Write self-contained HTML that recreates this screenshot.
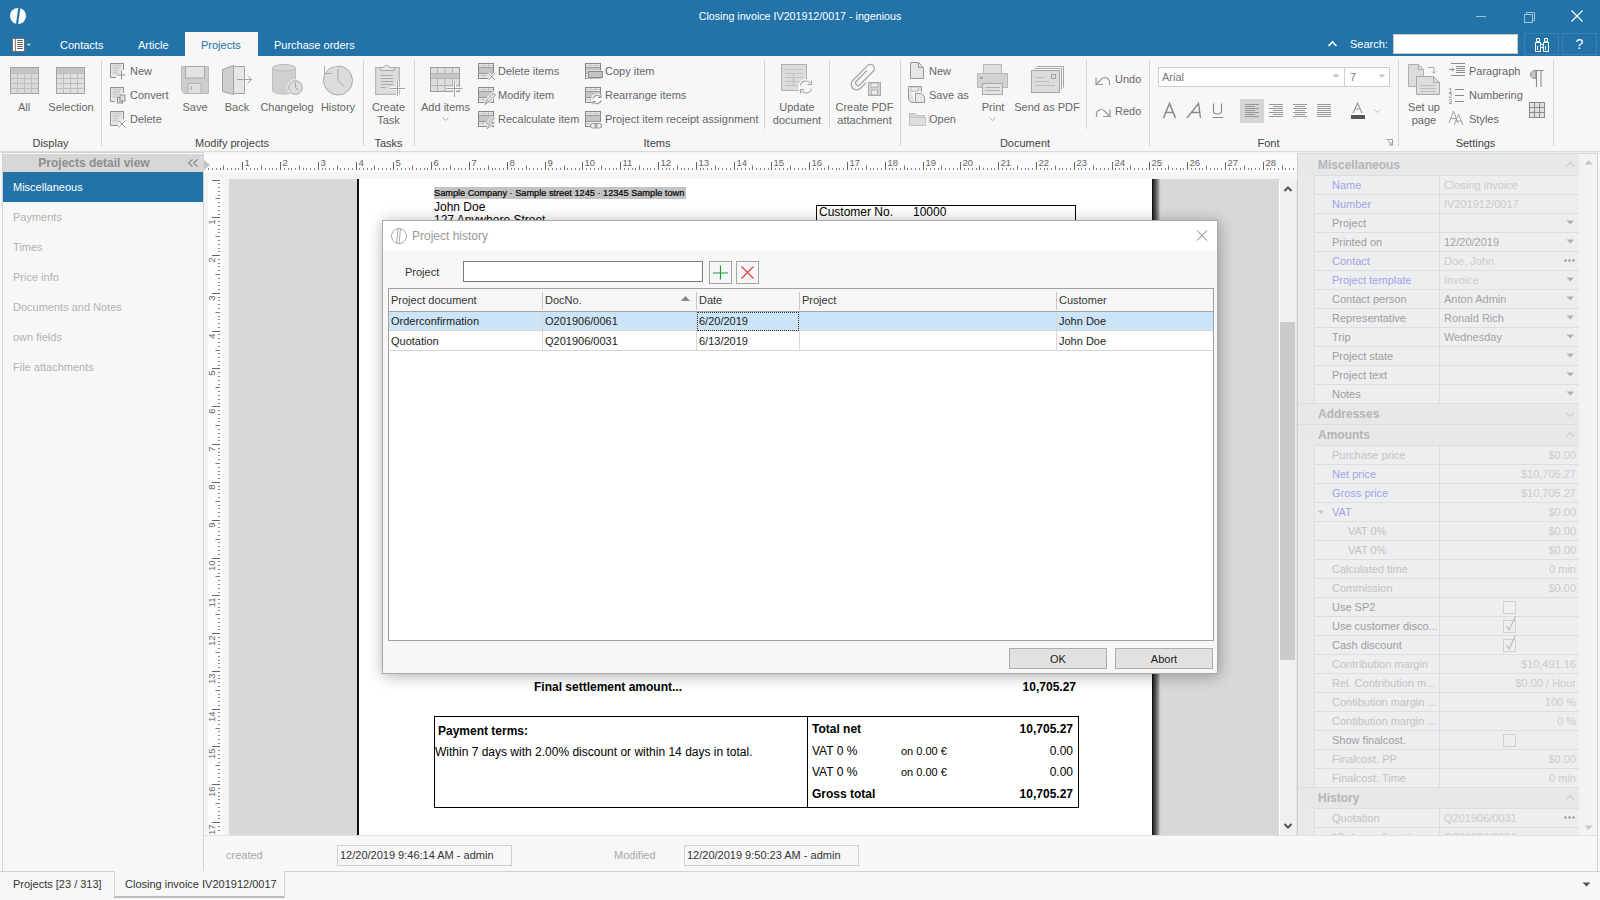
<!DOCTYPE html>
<html><head><meta charset="utf-8">
<style>
*{box-sizing:border-box;margin:0;padding:0}
html,body{width:1600px;height:900px;overflow:hidden;background:#f7f7f7;font-family:"Liberation Sans",sans-serif;font-size:11px;color:#444}
.a{position:absolute;white-space:nowrap;line-height:14px}
svg{position:absolute;overflow:visible}
.tw{color:#fff}
.rl{color:#666}
.gl{color:#444}
.sep{position:absolute;width:1px;background:#d4d4d4}
</style></head><body>
<!-- TITLE BAR -->
<div class="a" style="left:0;top:0;width:1600px;height:56px;background:#2373a9"></div>
<svg style="left:10px;top:8px" width="16" height="16" viewBox="0 0 16 16"><circle cx="8" cy="8" r="8" fill="#fff"/><path d="M8.3 -0.3 L10.4 0 L8.1 16.3 L6 16.1 Z" fill="#2373a9"/></svg>
<div class="a tw" style="left:0;top:9px;width:1600px;text-align:center;font-size:10.7px">Closing invoice IV201912/0017 - ingenious</div>
<svg style="left:1474px;top:10px" width="14" height="14"><line x1="2" y1="6.5" x2="12" y2="6.5" stroke="#9fc1da" stroke-width="1"/></svg>
<svg style="left:1522px;top:10px" width="14" height="14"><rect x="2.5" y="4.5" width="8" height="8" fill="none" stroke="#9fc1da"/><path d="M4.5 4.5 V2.5 H12.5 V10.5 H10.5" fill="none" stroke="#9fc1da"/></svg>
<svg style="left:1570px;top:9px" width="14" height="14"><path d="M1.5 1.5 L12.5 12.5 M12.5 1.5 L1.5 12.5" stroke="#fff" stroke-width="1.1"/></svg>
<!-- tabs row -->
<svg style="left:12px;top:38px" width="22" height="14"><rect x="0.5" y="0.5" width="12" height="13" fill="#fff" stroke="#746f6c"/><path d="M3.3 1V13.5" stroke="#746f6c"/><path d="M5.2 2.5H10.8M5.2 4.5H10.8M5.2 6.5H10.8M5.2 8.5H10.8M5.2 10.5H10.8" stroke="#5d5d5d"/><path d="M14.5 5.8H19L16.75 8Z" fill="#d9d4d0"/></svg>
<div class="a tw" style="left:60px;top:38px">Contacts</div>
<div class="a tw" style="left:138px;top:38px">Article</div>
<div class="a" style="left:185px;top:32px;width:73px;height:25px;background:#f7f7f7"></div>
<div class="a" style="left:201px;top:38px;color:#2373a9">Projects</div>
<div class="a tw" style="left:274px;top:38px">Purchase orders</div>
<svg style="left:1327px;top:39px" width="12" height="10"><path d="M1.5 7 L5.5 3 L9.5 7" fill="none" stroke="#fff" stroke-width="1.6"/></svg>
<div class="a tw" style="left:1350px;top:37px">Search:</div>
<div class="a" style="left:1393px;top:34px;width:125px;height:20px;background:#fff;border:1px solid #c9c9c9"></div>
<div class="a" style="left:1524px;top:33px;width:35px;height:22px;border:1px solid #3b82b3"></div>
<svg style="left:1533px;top:35px" width="18" height="18" viewBox="0 0 18 18"><path d="M3.5 3.5h3v3h-3zM11.5 3.5h3v3h-3z" fill="none" stroke="#fff"/><path d="M2.5 7.5h5v9h-5zM10.5 7.5h5v9h-5zM7.5 9.5h3v3h-3z" fill="none" stroke="#fff"/><path d="M4.5 11v4M12.5 11v4" stroke="#fff"/></svg>
<div class="a" style="left:1562px;top:33px;width:35px;height:22px;border:1px solid #3b82b3"></div>
<div class="a tw" style="left:1562px;top:37px;width:35px;text-align:center;font-size:14px">?</div>

<!-- RIBBON -->
<div class="a" style="left:0;top:151px;width:1600px;height:1px;background:#dadada"></div>
<div class="a" style="left:0;top:152px;width:1600px;height:1px;background:#ececec"></div>
<div class="sep" style="left:101px;top:60px;height:86px"></div>
<div class="sep" style="left:363px;top:60px;height:86px"></div>
<div class="sep" style="left:414px;top:60px;height:86px"></div>
<div class="sep" style="left:764px;top:60px;height:69px"></div>
<div class="sep" style="left:829px;top:60px;height:69px"></div>
<div class="sep" style="left:900px;top:60px;height:86px"></div>
<div class="sep" style="left:1086px;top:60px;height:69px"></div>
<div class="sep" style="left:1149px;top:60px;height:86px"></div>
<div class="sep" style="left:1398px;top:60px;height:86px"></div>
<div class="sep" style="left:1553px;top:60px;height:86px"></div>

<!-- Display group -->
<svg style="left:10px;top:67px" width="30" height="28" viewBox="0 0 30 28"><rect x="0.5" y="0.5" width="28" height="26" fill="#dadada" stroke="#a3a3a3"/><rect x="1" y="1" width="27" height="5.5" fill="#c4c4c4"/><path d="M1 6.5H28M1 11.5H28M1 16.5H28M1 21.5H28M7.5 6.5V26.5M14.5 6.5V26.5M21.5 6.5V26.5" stroke="#bdbdbd"/></svg>
<div class="a rl" style="left:0;top:100px;width:48px;text-align:center">All</div>
<svg style="left:56px;top:67px" width="30" height="28" viewBox="0 0 30 28"><rect x="0.5" y="0.5" width="28" height="26" fill="#e0e0e0" stroke="#a3a3a3"/><rect x="1" y="1" width="27" height="5.5" fill="#c4c4c4"/><path d="M1 6.5H28M1 11.5H28M1 16.5H28M1 21.5H28M7.5 6.5V26.5M14.5 6.5V26.5M21.5 6.5V26.5" stroke="#bdbdbd"/></svg>
<div class="a rl" style="left:48px;top:100px;width:46px;text-align:center">Selection</div>
<!-- Modify projects small -->
<svg style="left:110px;top:63px" width="17" height="17" viewBox="0 0 17 17"><path d="M13.5 7V0.5H0.5V14.5H6" fill="#e6e6e6" stroke="#8f8f8f"/><path d="M2.5 2.5h9M2.5 5h8M2.5 7.5h6M2.5 10h5" stroke="#c8c8c8" stroke-width="1.5"/><path d="M11.5 8V16M7.5 12H15.5" stroke="#8f8f8f"/></svg>
<div class="a rl" style="left:130px;top:64px">New</div>
<svg style="left:110px;top:87px" width="17" height="17" viewBox="0 0 17 17"><path d="M13.5 6V0.5H0.5V14.5H5" fill="#e6e6e6" stroke="#8f8f8f"/><path d="M2.5 2.5h9M2.5 5h8M2.5 7.5h6M2.5 10h5" stroke="#c8c8c8" stroke-width="1.5"/><rect x="7.5" y="10.5" width="5" height="5.5" fill="#ddd" stroke="#8f8f8f"/><rect x="10" y="8" width="5" height="6" fill="#ddd" stroke="#8f8f8f"/></svg>
<div class="a rl" style="left:130px;top:88px">Convert</div>
<svg style="left:110px;top:111px" width="17" height="17" viewBox="0 0 17 17"><path d="M13.5 8V0.5H0.5V14.5H8" fill="#e6e6e6" stroke="#8f8f8f"/><path d="M2.5 2.5h9M2.5 5h8M2.5 7.5h6M2.5 10h5" stroke="#c8c8c8" stroke-width="1.5"/><path d="M8.5 9.5L15.5 16.5M15.5 9.5L8.5 16.5" stroke="#9a9a9a"/></svg>
<div class="a rl" style="left:130px;top:112px">Delete</div>
<!-- Save -->
<svg style="left:181px;top:66px" width="28" height="28" viewBox="0 0 28 28"><path d="M0.5 0.5H27.5V27.5H3L0.5 24.5Z" fill="#cdcdcd" stroke="#bcbcbc"/><rect x="4.5" y="0.5" width="19" height="11.5" fill="#e3e3e3" stroke="#a9a9a9"/><rect x="7" y="17.5" width="13" height="10" fill="#e0e0e0" stroke="#b3b3b3"/><path d="M10.5 20v4" stroke="#a9a9a9"/></svg>
<div class="a rl" style="left:172px;top:100px;width:46px;text-align:center">Save</div>
<!-- Back -->
<svg style="left:222px;top:65px" width="31" height="30" viewBox="0 0 31 30"><path d="M11.5 1.5H22.5V28.5H11.5" fill="#e6e6e6" stroke="#a2a2a2"/><path d="M0.5 4.5L11.5 0.5V29.5L0.5 26.5Z" fill="#cfcfcf" stroke="#a2a2a2"/><path d="M15 14.5H29.5M25.5 10.5L29.5 14.5L25.5 18.5" fill="none" stroke="#a2a2a2"/></svg>
<div class="a rl" style="left:214px;top:100px;width:46px;text-align:center">Back</div>
<!-- Changelog -->
<svg style="left:272px;top:64px" width="32" height="32" viewBox="0 0 32 32"><path d="M0.5 3.5V26.5C0.5 28.5 5 30 11.5 30S23 28.5 23.5 26.5V3.5" fill="#d0d0d0" stroke="#c0c0c0"/><ellipse cx="12" cy="3.8" rx="11.5" ry="3.3" fill="#d6d6d6" stroke="#bdbdbd"/><circle cx="23.5" cy="23.5" r="7.5" fill="#dcdcdc" stroke="#f7f7f7" stroke-width="1.5"/><circle cx="23.5" cy="23.5" r="6.8" fill="#dcdcdc" stroke="#a6a6a6"/><path d="M23.5 18.5V23.5L26 26" fill="none" stroke="#a6a6a6"/></svg>
<div class="a rl" style="left:257px;top:100px;width:60px;text-align:center">Changelog</div>
<!-- History -->
<svg style="left:322px;top:64px" width="32" height="32" viewBox="0 0 32 32"><circle cx="16" cy="16.5" r="14.5" fill="#dcdcdc" stroke="#a9a9a9"/><path d="M14.5 1H2V8" fill="none" stroke="#f7f7f7" stroke-width="3"/><path d="M2.5 2V9.5H10" fill="none" stroke="#a9a9a9"/><path d="M16 5V16.5L22.5 23" fill="none" stroke="#a9a9a9"/></svg>
<div class="a rl" style="left:315px;top:100px;width:46px;text-align:center">History</div>


<!-- Create Task -->
<svg style="left:375px;top:63px" width="32" height="34" viewBox="0 0 32 34"><rect x="0.5" y="4.5" width="24" height="27" fill="#d4d4d4" stroke="#b8b8b8"/><rect x="2" y="6" width="21" height="24" fill="#dcdcdc"/><path d="M5.5 7.5V4.5H9C9 1.5 14 1.5 14 4.5H19.5V7.5Z" fill="#e6e6e6" stroke="#a9a9a9"/><path d="M6 12.5H18M6 15.5H18M6 18.5H18M6 21.5H18M6 24.5H11" stroke="#ababab"/><path d="M22.5 18V33M15 25.5H30" stroke="#f7f7f7" stroke-width="3"/><path d="M22.5 18V33M15 25.5H30" stroke="#a0a0a0"/></svg>
<div class="a rl" style="left:363px;top:100px;width:51px;text-align:center">Create</div>
<div class="a rl" style="left:363px;top:113px;width:51px;text-align:center">Task</div>
<!-- Add items -->
<svg style="left:429px;top:66px" width="35" height="32" viewBox="0 0 35 32"><rect x="1.5" y="1.5" width="29" height="24" fill="#dedede" stroke="#9c9c9c"/><rect x="2" y="7" width="28" height="6" fill="#c6c6c6"/><path d="M2 7.5H30M2 12.5H30M2 19.5H30M8.5 2V7M16 2V7M23.5 2V7M8.5 13V25M16 13V25M23.5 13V25" stroke="#b3b3b3"/><path d="M25.5 15V31M17.5 22.5H33.5" stroke="#f7f7f7" stroke-width="3"/><path d="M25.5 15V31M17.5 22.5H33.5" stroke="#a0a0a0"/></svg>
<div class="a rl" style="left:414px;top:100px;width:63px;text-align:center">Add items</div>
<svg style="left:441px;top:116px" width="10" height="6"><path d="M1.5 1.5L4.5 4.5L7.5 1.5" fill="none" stroke="#aaa"/></svg>
<!-- items small -->
<svg style="left:478px;top:63px" width="19" height="18" viewBox="0 0 19 18"><rect x="0.5" y="0.5" width="15" height="15" fill="#e9e9e9" stroke="#8a8a8a"/><rect x="1" y="5" width="14" height="5" fill="#c4c4c4"/><path d="M1 4.5H15M1 10.5H15" stroke="#9a9a9a"/><path d="M5.5 1V4M10.5 1V4M5.5 11V15M10.5 11V15M1 2.5H15M1 12.5H15" stroke="#c6c6c6"/><path d="M10.5 10.5L17 17M17 10.5L10.5 17" stroke="#f7f7f7" stroke-width="3"/><path d="M10.5 10.5L17 17M17 10.5L10.5 17" stroke="#999" stroke-width="1"/></svg>
<div class="a rl" style="left:498px;top:64px">Delete items</div>
<svg style="left:478px;top:87px" width="19" height="18" viewBox="0 0 19 18"><g><rect x="0.5" y="0.5" width="15" height="15" fill="#e9e9e9" stroke="#8a8a8a"/><rect x="1" y="5" width="14" height="5" fill="#c4c4c4"/><path d="M1 4.5H15M1 10.5H15" stroke="#9a9a9a"/><path d="M5.5 1V4M10.5 1V4M5.5 11V15M10.5 11V15M1 2.5H15M1 12.5H15" stroke="#c6c6c6"/></g><path d="M7 17.5L8.5 13L15.5 6L17.5 8L10.5 15Z" fill="#e6e6e6" stroke="#f7f7f7" stroke-width="3"/><path d="M7 17.5L8.5 13L15.5 6L17.5 8L10.5 15Z" fill="#e6e6e6" stroke="#999"/><path d="M9 13.5L11 15.5" stroke="#999"/></svg>
<div class="a rl" style="left:498px;top:88px">Modify item</div>
<svg style="left:478px;top:111px" width="19" height="18" viewBox="0 0 19 18"><rect x="0.5" y="0.5" width="15" height="15" fill="#e9e9e9" stroke="#8a8a8a"/><rect x="1" y="5" width="14" height="5" fill="#c4c4c4"/><path d="M1 4.5H15M1 10.5H15" stroke="#9a9a9a"/><path d="M5.5 1V4M10.5 1V4M5.5 11V15M10.5 11V15M1 2.5H15M1 12.5H15" stroke="#c6c6c6"/><path d="M14 7L8 13H11.5L9 18L16.5 11.5H13L16.5 7Z" fill="#dcdcdc" stroke="#f7f7f7" stroke-width="2.5"/><path d="M14 7L8 13H11.5L9 18L16.5 11.5H13L16.5 7Z" fill="#dcdcdc" stroke="#a0a0a0" stroke-width="0.9"/></svg>
<div class="a rl" style="left:498px;top:112px">Recalculate item</div>
<svg style="left:585px;top:63px" width="19" height="18" viewBox="0 0 19 18"><rect x="0.5" y="0.5" width="15" height="15" fill="#e9e9e9" stroke="#8a8a8a"/><rect x="1" y="5" width="14" height="5" fill="#c4c4c4"/><path d="M1 4.5H15M1 10.5H15" stroke="#9a9a9a"/><path d="M5.5 1V4M10.5 1V4M5.5 11V15M10.5 11V15M1 2.5H15M1 12.5H15" stroke="#c6c6c6"/><rect x="3.5" y="8.5" width="14" height="6" fill="#c4c4c4" stroke="#f7f7f7" stroke-width="2"/><rect x="3.5" y="8.5" width="14" height="6" fill="#c4c4c4" stroke="#8a8a8a"/></svg>
<div class="a rl" style="left:605px;top:64px">Copy item</div>
<svg style="left:585px;top:87px" width="19" height="18" viewBox="0 0 19 18"><rect x="0.5" y="0.5" width="15" height="15" fill="#e9e9e9" stroke="#8a8a8a"/><rect x="1" y="5" width="14" height="5" fill="#c4c4c4"/><path d="M1 4.5H15M1 10.5H15" stroke="#9a9a9a"/><path d="M5.5 1V4M10.5 1V4M5.5 11V15M10.5 11V15M1 2.5H15M1 12.5H15" stroke="#c6c6c6"/><circle cx="12" cy="12.5" r="6" fill="#f7f7f7"/><path d="M8 11.5A4.2 4.2 0 0 1 15.5 10M16 13.5A4.2 4.2 0 0 1 8.5 15" fill="none" stroke="#999" stroke-width="1.2"/><path d="M16 7.5V10.5H13M8 17.5V14.5H11" fill="none" stroke="#999" stroke-width="1.1"/></svg>
<div class="a rl" style="left:605px;top:88px">Rearrange items</div>
<svg style="left:585px;top:111px" width="19" height="18" viewBox="0 0 19 18"><rect x="0.5" y="0.5" width="15" height="15" fill="#e9e9e9" stroke="#8a8a8a"/><rect x="1" y="5" width="14" height="5" fill="#c4c4c4"/><path d="M1 4.5H15M1 10.5H15" stroke="#9a9a9a"/><path d="M5.5 1V4M10.5 1V4M5.5 11V15M10.5 11V15M1 2.5H15M1 12.5H15" stroke="#c6c6c6"/><rect x="5" y="11" width="13" height="7" fill="#f7f7f7"/><rect x="5.5" y="12.5" width="6.5" height="4.5" rx="2.25" fill="none" stroke="#999" stroke-width="1.1"/><rect x="10" y="12.5" width="6.5" height="4.5" rx="2.25" fill="none" stroke="#999" stroke-width="1.1"/></svg>
<div class="a rl" style="left:605px;top:112px">Project item receipt assignment</div>
<!-- Update document -->
<svg style="left:781px;top:64px" width="33" height="32" viewBox="0 0 33 32"><rect x="0.5" y="0.5" width="25" height="26" fill="#dcdcdc" stroke="#b0b0b0"/><path d="M4 5.5H22M4 9.5H22M4 13.5H22M4 17.5H22M4 21.5H18M12.5 9V22" stroke="#c2c2c2" stroke-width="1.2"/><circle cx="25" cy="23" r="8" fill="#f7f7f7"/><path d="M19.5 21.5A5.5 5.5 0 0 1 29.5 19.5M30.5 24.5A5.5 5.5 0 0 1 20.5 26.5" fill="none" stroke="#a9a9a9" stroke-width="1.2"/><path d="M30.5 16.5V20.5H26.5M19.5 29.5V25.5H23.5" fill="none" stroke="#a9a9a9" stroke-width="1.2"/></svg>
<div class="a rl" style="left:765px;top:100px;width:64px;text-align:center">Update</div>
<div class="a rl" style="left:765px;top:113px;width:64px;text-align:center">document</div>
<!-- Create PDF attachment -->
<svg style="left:849px;top:63px" width="34" height="34" viewBox="0 0 34 34"><g transform="translate(14 15) rotate(45) translate(-7 -18)"><path d="M4.5 10V25A2.5 2.5 0 0 0 9.5 25V6A4 4 0 0 0 1.5 6V27A5.5 5.5 0 0 0 12.5 27V19" fill="none" stroke="#a8a8a8" stroke-width="1.3"/></g><rect x="19.5" y="19.5" width="12" height="13" fill="#d4d4d4" stroke="#a8a8a8"/><rect x="22" y="20" width="7" height="4" fill="#ececec" stroke="#a8a8a8" stroke-width="0.8"/><rect x="22.5" y="27" width="6" height="5" fill="#ececec" stroke="#a8a8a8" stroke-width="0.8"/></svg>
<div class="a rl" style="left:829px;top:100px;width:71px;text-align:center">Create PDF</div>
<div class="a rl" style="left:829px;top:113px;width:71px;text-align:center">attachment</div>
<!-- Document small -->
<svg style="left:909px;top:62px" width="17" height="18" viewBox="0 0 17 18"><path d="M1.5 0.5H9.5L14.5 5.5V16.5H1.5Z" fill="#e6e6e6" stroke="#999"/><path d="M9.5 0.5V5.5H14.5" fill="none" stroke="#999"/></svg>
<div class="a rl" style="left:929px;top:64px">New</div>
<svg style="left:908px;top:86px" width="18" height="18" viewBox="0 0 18 18"><path d="M0.5 0.5H13.5V6M0.5 0.5V13.5L3 16.5H7" fill="#e0e0e0" stroke="#999"/><rect x="3" y="1" width="7" height="4" fill="#f0f0f0" stroke="#aaa" stroke-width="0.8"/><path d="M7.5 7.5H13.5L16.5 10.5V16.5H7.5Z" fill="#e6e6e6" stroke="#999"/></svg>
<div class="a rl" style="left:929px;top:88px">Save as</div>
<svg style="left:909px;top:111px" width="18" height="17" viewBox="0 0 18 17"><path d="M0.5 2.5H6L8 4.5H15.5V14.5H0.5Z" fill="#d5d5d5" stroke="#c0c0c0"/><path d="M0.5 6.5H16.5V14.5H0.5Z" fill="#dedede" stroke="#c4c4c4"/></svg>
<div class="a rl" style="left:929px;top:112px">Open</div>
<!-- Print -->
<svg style="left:977px;top:64px" width="32" height="32" viewBox="0 0 32 32"><rect x="6.5" y="0.5" width="18" height="9" fill="#dedede" stroke="#b8b8b8"/><rect x="0.5" y="9.5" width="30" height="14" fill="#d2d2d2" stroke="#b8b8b8"/><rect x="3" y="13" width="3" height="2" fill="#a0a0a0"/><rect x="5.5" y="19.5" width="20" height="11" fill="#e2e2e2" stroke="#a8a8a8"/><path d="M8 23.5H23M8 26.5H23" stroke="#b0b0b0"/></svg>
<div class="a rl" style="left:961px;top:100px;width:64px;text-align:center">Print</div>
<svg style="left:988px;top:116px" width="10" height="6"><path d="M1.5 1.5L4.5 4.5L7.5 1.5" fill="none" stroke="#aaa"/></svg>
<!-- Send as PDF -->
<svg style="left:1031px;top:66px" width="34" height="28" viewBox="0 0 34 28"><path d="M5.5 0.5H32.5V21.5M3.5 2.5H30.5V23.5" fill="none" stroke="#a6a6a6"/><rect x="0.5" y="4.5" width="28" height="22" fill="#dcdcdc" stroke="#a6a6a6"/><rect x="20.5" y="8.5" width="4" height="4" fill="none" stroke="#a6a6a6"/><path d="M4 11.5H14M4 15.5H18M4 19.5H24" stroke="#bdbdbd"/></svg>
<div class="a rl" style="left:1010px;top:100px;width:74px;text-align:center">Send as PDF</div>
<!-- undo redo -->
<svg style="left:1094px;top:73px" width="18" height="16" viewBox="0 0 18 16"><path d="M2 4.5V11.5H9M2.5 11L7.5 6C10.5 3 15 5 15.5 8.5V12" fill="none" stroke="#999" stroke-width="1.2"/></svg>
<div class="a rl" style="left:1115px;top:72px">Undo</div>
<svg style="left:1094px;top:104px" width="18" height="16" viewBox="0 0 18 16"><path d="M16 5.5V12.5H9M15.5 12L10.5 7C7.5 4 3 6 2.5 9.5V13" fill="none" stroke="#999" stroke-width="1.2"/></svg>
<div class="a rl" style="left:1115px;top:104px">Redo</div>
<!-- Font -->
<div class="a" style="left:1158px;top:67px;width:187px;height:20px;background:#fff;border:1px solid #cfcfcf"></div>
<div class="a" style="left:1162px;top:70px;color:#777">Arial</div>
<svg style="left:1332px;top:74px" width="8" height="5"><path d="M0.5 0.5H7.5L4 4Z" fill="#c4c4c4"/></svg>
<div class="a" style="left:1344px;top:67px;width:46px;height:20px;background:#fff;border:1px solid #cfcfcf"></div>
<div class="a" style="left:1350px;top:70px;color:#777">7</div>
<svg style="left:1378px;top:74px" width="8" height="5"><path d="M0.5 0.5H7.5L4 4Z" fill="#c4c4c4"/></svg>
<svg style="left:1162px;top:102px" width="17" height="17"><path d="M1.5 16L7.5 1.5L13.5 16M4 10.5H11" fill="none" stroke="#8a8a8a" stroke-width="1.6"/></svg>
<svg style="left:1186px;top:102px" width="18" height="17"><path d="M1 16L12.5 1.5L14.5 16M5 10.5H13.5" fill="none" stroke="#8a8a8a" stroke-width="1.4"/></svg>
<svg style="left:1211px;top:102px" width="15" height="16"><path d="M2.5 1.5V9C2.5 13 10.5 13 10.5 9V1.5M1.5 15.5H12" fill="none" stroke="#8a8a8a" stroke-width="1.1"/></svg>
<div class="a" style="left:1240px;top:99px;width:24px;height:24px;background:#d5d5d5"></div>
<svg style="left:1244px;top:103px" width="17" height="16"><path d="M1 1.5H15M1 3.5H11M1 5.5H15M1 7.5H11M1 9.5H15M1 11.5H11M1 13.5H15" stroke="#999"/></svg>
<svg style="left:1268px;top:103px" width="17" height="16"><path d="M1 1.5H15M5 3.5H15M1 5.5H15M5 7.5H15M1 9.5H15M5 11.5H15M1 13.5H15" stroke="#999"/></svg>
<svg style="left:1292px;top:103px" width="17" height="16"><path d="M1 1.5H15M3 3.5H13M1 5.5H15M3 7.5H13M1 9.5H15M3 11.5H13M1 13.5H15" stroke="#999"/></svg>
<svg style="left:1316px;top:103px" width="17" height="16"><path d="M1 1.5H15M1 3.5H15M1 5.5H15M1 7.5H15M1 9.5H15M1 11.5H15M1 13.5H15" stroke="#999"/></svg>
<svg style="left:1350px;top:102px" width="16" height="18"><path d="M3 11L7.5 1L12 11M5 7H10" fill="none" stroke="#999" stroke-width="1.1"/><rect x="1" y="13" width="14" height="4" fill="#555"/></svg>
<svg style="left:1373px;top:108px" width="10" height="6"><path d="M1.5 1.5L4.5 4.5L7.5 1.5" fill="none" stroke="#bbb"/></svg>
<!-- Settings -->
<svg style="left:1408px;top:64px" width="33" height="32" viewBox="0 0 33 32"><path d="M0.5 0.5H10.5L15.5 5.5V22.5H0.5Z" fill="#dcdcdc" stroke="#b0b0b0"/><path d="M10.5 0.5V5.5H15.5" fill="none" stroke="#b0b0b0"/><path d="M8.5 12.5H25.5L31.5 18.5V30.5H8.5Z" fill="#dedede" stroke="#a8a8a8"/><path d="M25.5 12.5V18.5H31.5" fill="none" stroke="#a8a8a8"/><path d="M12 21.5H28M12 24.5H28M12 27.5H28" stroke="#bdbdbd"/><path d="M20 3.5H26V9M24 7.5L26 9.5L28 7.5" fill="none" stroke="#aaa"/></svg>
<div class="a rl" style="left:1398px;top:100px;width:52px;text-align:center">Set up</div>
<div class="a rl" style="left:1398px;top:113px;width:52px;text-align:center">page</div>
<svg style="left:1448px;top:62px" width="18" height="16"><path d="M3 1.5H17M8 4.5H17M8 6.5H17M8 8.5H17M8 10.5H17M3 13.5H17" stroke="#8c8c8c"/><path d="M1 7.5H6M4 5.5L6 7.5L4 9.5" fill="none" stroke="#8c8c8c"/></svg>
<div class="a rl" style="left:1469px;top:64px">Paragraph</div>
<svg style="left:1448px;top:86px" width="18" height="18"><text x="0.5" y="6.5" font-size="6.5" fill="#7a7a7a" font-family="Liberation Sans">1</text><text x="0.5" y="12" font-size="6.5" fill="#7a7a7a" font-family="Liberation Sans">2</text><text x="0.5" y="17.5" font-size="6.5" fill="#7a7a7a" font-family="Liberation Sans">3</text><path d="M7 3.5H16M7 9.5H16M7 15.5H16" stroke="#8a8a8a"/></svg>
<div class="a rl" style="left:1469px;top:88px">Numbering</div>
<svg style="left:1448px;top:109px" width="18" height="18"><path d="M1 14L5.5 2L10 14M2.5 9.5H8.5M6 16L10.5 5L15 16M7.5 12H13.5" fill="none" stroke="#a5a5a5" stroke-width="1"/></svg>
<div class="a rl" style="left:1469px;top:112px">Styles</div>
<svg style="left:1529px;top:69px" width="16" height="20"><path d="M7 1.5C3 1.5 1.5 3.5 1.5 5.5S3 9.5 7 9.5Z" fill="#c4c4c4" stroke="#8a8a8a"/><path d="M7 1.5H14.5M7.5 1.5V18M12 1.5V18" fill="none" stroke="#8a8a8a" stroke-width="1.1"/></svg>
<svg style="left:1529px;top:102px" width="17" height="17"><rect x="0.5" y="0.5" width="15" height="15" fill="#e2e2e2" stroke="#8a8a8a"/><path d="M0.5 5.5H15.5M0.5 10.5H15.5M5.5 0.5V15.5M10.5 0.5V15.5" stroke="#8a8a8a"/></svg>

<!-- group labels -->
<div class="a gl" style="left:0;top:136px;width:101px;text-align:center">Display</div>
<div class="a gl" style="left:101px;top:136px;width:262px;text-align:center">Modify projects</div>
<div class="a gl" style="left:363px;top:136px;width:51px;text-align:center">Tasks</div>
<div class="a gl" style="left:414px;top:136px;width:486px;text-align:center">Items</div>
<div class="a gl" style="left:900px;top:136px;width:250px;text-align:center">Document</div>
<div class="a gl" style="left:1150px;top:136px;width:237px;text-align:center">Font</div>
<div class="a gl" style="left:1398px;top:136px;width:155px;text-align:center">Settings</div>
<svg style="left:1385px;top:138px" width="10" height="10"><path d="M1.5 1.5h6v6" fill="none" stroke="#999"/><path d="M3 3l4 4M4 7h3V4" fill="none" stroke="#999"/></svg>

<!-- LEFT PANEL -->
<div class="a" style="left:2px;top:152px;width:202px;height:720px;background:#f7f7f7;border:1px solid #d2d2d2"></div>
<div class="a" style="left:3px;top:154px;width:200px;height:18px;background:#d7d7d7"></div>
<div class="a" style="left:3px;top:156px;width:182px;text-align:center;font-weight:bold;font-size:12px;color:#8e8e8e">Projects detail view</div>
<svg style="left:187px;top:158px" width="12" height="10"><path d="M5.5 1.5L1.5 5L5.5 8.5M10.5 1.5L6.5 5L10.5 8.5" fill="none" stroke="#888" stroke-width="1.1"/></svg>
<div class="a" style="left:3px;top:172px;width:200px;height:30px;background:#2373a9"></div>
<div class="a" style="left:13px;top:180px;color:#fff">Miscellaneous</div>
<div class="a" style="left:13px;top:210px;color:#b2b2b2">Payments</div>
<div class="a" style="left:13px;top:240px;color:#b2b2b2">Times</div>
<div class="a" style="left:13px;top:270px;color:#b2b2b2">Price info</div>
<div class="a" style="left:13px;top:300px;color:#b2b2b2">Documents and Notes</div>
<div class="a" style="left:13px;top:330px;color:#b2b2b2">own fields</div>
<div class="a" style="left:13px;top:360px;color:#b2b2b2">File attachments</div>

<!-- MAIN AREA -->
<div class="a" style="left:204px;top:152px;width:1094px;height:684px;background:#f5f5f5"></div>
<div class="a" style="left:204px;top:154px;width:1093px;height:19px;background:#fafafa"></div>
<svg style="left:0;top:0" width="1600" height="900" viewBox="0 0 1600 900"><path d="M208.5 168V170" stroke="#888"/><path d="M212.5 168V170" stroke="#888"/><path d="M216.5 168V170" stroke="#888"/><path d="M220.5 168V170" stroke="#888"/><path d="M223.5 165.5V170" stroke="#777"/><path d="M227.5 168V170" stroke="#888"/><path d="M231.5 168V170" stroke="#888"/><path d="M235.5 168V170" stroke="#888"/><path d="M238.5 168V170" stroke="#888"/><path d="M242.5 162V170" stroke="#666"/><text x="244.5" y="166" font-size="9.5" fill="#666" font-family="Liberation Sans">1</text><path d="M246.5 168V170" stroke="#888"/><path d="M250.5 168V170" stroke="#888"/><path d="M254.5 168V170" stroke="#888"/><path d="M257.5 168V170" stroke="#888"/><path d="M261.5 165.5V170" stroke="#777"/><path d="M265.5 168V170" stroke="#888"/><path d="M269.5 168V170" stroke="#888"/><path d="M272.5 168V170" stroke="#888"/><path d="M276.5 168V170" stroke="#888"/><path d="M280.5 162V170" stroke="#666"/><text x="282.5" y="166" font-size="9.5" fill="#666" font-family="Liberation Sans">2</text><path d="M284.5 168V170" stroke="#888"/><path d="M288.5 168V170" stroke="#888"/><path d="M291.5 168V170" stroke="#888"/><path d="M295.5 168V170" stroke="#888"/><path d="M299.5 165.5V170" stroke="#777"/><path d="M303.5 168V170" stroke="#888"/><path d="M306.5 168V170" stroke="#888"/><path d="M310.5 168V170" stroke="#888"/><path d="M314.5 168V170" stroke="#888"/><path d="M318.5 162V170" stroke="#666"/><text x="320.5" y="166" font-size="9.5" fill="#666" font-family="Liberation Sans">3</text><path d="M322.5 168V170" stroke="#888"/><path d="M325.5 168V170" stroke="#888"/><path d="M329.5 168V170" stroke="#888"/><path d="M333.5 168V170" stroke="#888"/><path d="M337.5 165.5V170" stroke="#777"/><path d="M340.5 168V170" stroke="#888"/><path d="M344.5 168V170" stroke="#888"/><path d="M348.5 168V170" stroke="#888"/><path d="M352.5 168V170" stroke="#888"/><path d="M356.5 162V170" stroke="#666"/><text x="358.5" y="166" font-size="9.5" fill="#666" font-family="Liberation Sans">4</text><path d="M359.5 168V170" stroke="#888"/><path d="M363.5 168V170" stroke="#888"/><path d="M367.5 168V170" stroke="#888"/><path d="M371.5 168V170" stroke="#888"/><path d="M374.5 165.5V170" stroke="#777"/><path d="M378.5 168V170" stroke="#888"/><path d="M382.5 168V170" stroke="#888"/><path d="M386.5 168V170" stroke="#888"/><path d="M390.5 168V170" stroke="#888"/><path d="M393.5 162V170" stroke="#666"/><text x="395.5" y="166" font-size="9.5" fill="#666" font-family="Liberation Sans">5</text><path d="M397.5 168V170" stroke="#888"/><path d="M401.5 168V170" stroke="#888"/><path d="M405.5 168V170" stroke="#888"/><path d="M409.5 168V170" stroke="#888"/><path d="M412.5 165.5V170" stroke="#777"/><path d="M416.5 168V170" stroke="#888"/><path d="M420.5 168V170" stroke="#888"/><path d="M424.5 168V170" stroke="#888"/><path d="M427.5 168V170" stroke="#888"/><path d="M431.5 162V170" stroke="#666"/><text x="433.5" y="166" font-size="9.5" fill="#666" font-family="Liberation Sans">6</text><path d="M435.5 168V170" stroke="#888"/><path d="M439.5 168V170" stroke="#888"/><path d="M443.5 168V170" stroke="#888"/><path d="M446.5 168V170" stroke="#888"/><path d="M450.5 165.5V170" stroke="#777"/><path d="M454.5 168V170" stroke="#888"/><path d="M458.5 168V170" stroke="#888"/><path d="M461.5 168V170" stroke="#888"/><path d="M465.5 168V170" stroke="#888"/><path d="M469.5 162V170" stroke="#666"/><text x="471.5" y="166" font-size="9.5" fill="#666" font-family="Liberation Sans">7</text><path d="M473.5 168V170" stroke="#888"/><path d="M477.5 168V170" stroke="#888"/><path d="M480.5 168V170" stroke="#888"/><path d="M484.5 168V170" stroke="#888"/><path d="M488.5 165.5V170" stroke="#777"/><path d="M492.5 168V170" stroke="#888"/><path d="M495.5 168V170" stroke="#888"/><path d="M499.5 168V170" stroke="#888"/><path d="M503.5 168V170" stroke="#888"/><path d="M507.5 162V170" stroke="#666"/><text x="509.5" y="166" font-size="9.5" fill="#666" font-family="Liberation Sans">8</text><path d="M511.5 168V170" stroke="#888"/><path d="M514.5 168V170" stroke="#888"/><path d="M518.5 168V170" stroke="#888"/><path d="M522.5 168V170" stroke="#888"/><path d="M526.5 165.5V170" stroke="#777"/><path d="M529.5 168V170" stroke="#888"/><path d="M533.5 168V170" stroke="#888"/><path d="M537.5 168V170" stroke="#888"/><path d="M541.5 168V170" stroke="#888"/><path d="M545.5 162V170" stroke="#666"/><text x="547.5" y="166" font-size="9.5" fill="#666" font-family="Liberation Sans">9</text><path d="M548.5 168V170" stroke="#888"/><path d="M552.5 168V170" stroke="#888"/><path d="M556.5 168V170" stroke="#888"/><path d="M560.5 168V170" stroke="#888"/><path d="M564.5 165.5V170" stroke="#777"/><path d="M567.5 168V170" stroke="#888"/><path d="M571.5 168V170" stroke="#888"/><path d="M575.5 168V170" stroke="#888"/><path d="M579.5 168V170" stroke="#888"/><path d="M582.5 162V170" stroke="#666"/><text x="584.5" y="166" font-size="9.5" fill="#666" font-family="Liberation Sans">10</text><path d="M586.5 168V170" stroke="#888"/><path d="M590.5 168V170" stroke="#888"/><path d="M594.5 168V170" stroke="#888"/><path d="M598.5 168V170" stroke="#888"/><path d="M601.5 165.5V170" stroke="#777"/><path d="M605.5 168V170" stroke="#888"/><path d="M609.5 168V170" stroke="#888"/><path d="M613.5 168V170" stroke="#888"/><path d="M616.5 168V170" stroke="#888"/><path d="M620.5 162V170" stroke="#666"/><text x="622.5" y="166" font-size="9.5" fill="#666" font-family="Liberation Sans">11</text><path d="M624.5 168V170" stroke="#888"/><path d="M628.5 168V170" stroke="#888"/><path d="M632.5 168V170" stroke="#888"/><path d="M635.5 168V170" stroke="#888"/><path d="M639.5 165.5V170" stroke="#777"/><path d="M643.5 168V170" stroke="#888"/><path d="M647.5 168V170" stroke="#888"/><path d="M650.5 168V170" stroke="#888"/><path d="M654.5 168V170" stroke="#888"/><path d="M658.5 162V170" stroke="#666"/><text x="660.5" y="166" font-size="9.5" fill="#666" font-family="Liberation Sans">12</text><path d="M662.5 168V170" stroke="#888"/><path d="M666.5 168V170" stroke="#888"/><path d="M669.5 168V170" stroke="#888"/><path d="M673.5 168V170" stroke="#888"/><path d="M677.5 165.5V170" stroke="#777"/><path d="M681.5 168V170" stroke="#888"/><path d="M684.5 168V170" stroke="#888"/><path d="M688.5 168V170" stroke="#888"/><path d="M692.5 168V170" stroke="#888"/><path d="M696.5 162V170" stroke="#666"/><text x="698.5" y="166" font-size="9.5" fill="#666" font-family="Liberation Sans">13</text><path d="M700.5 168V170" stroke="#888"/><path d="M703.5 168V170" stroke="#888"/><path d="M707.5 168V170" stroke="#888"/><path d="M711.5 168V170" stroke="#888"/><path d="M715.5 165.5V170" stroke="#777"/><path d="M718.5 168V170" stroke="#888"/><path d="M722.5 168V170" stroke="#888"/><path d="M726.5 168V170" stroke="#888"/><path d="M730.5 168V170" stroke="#888"/><path d="M734.5 162V170" stroke="#666"/><text x="736.5" y="166" font-size="9.5" fill="#666" font-family="Liberation Sans">14</text><path d="M737.5 168V170" stroke="#888"/><path d="M741.5 168V170" stroke="#888"/><path d="M745.5 168V170" stroke="#888"/><path d="M749.5 168V170" stroke="#888"/><path d="M752.5 165.5V170" stroke="#777"/><path d="M756.5 168V170" stroke="#888"/><path d="M760.5 168V170" stroke="#888"/><path d="M764.5 168V170" stroke="#888"/><path d="M768.5 168V170" stroke="#888"/><path d="M771.5 162V170" stroke="#666"/><text x="773.5" y="166" font-size="9.5" fill="#666" font-family="Liberation Sans">15</text><path d="M775.5 168V170" stroke="#888"/><path d="M779.5 168V170" stroke="#888"/><path d="M783.5 168V170" stroke="#888"/><path d="M787.5 168V170" stroke="#888"/><path d="M790.5 165.5V170" stroke="#777"/><path d="M794.5 168V170" stroke="#888"/><path d="M798.5 168V170" stroke="#888"/><path d="M802.5 168V170" stroke="#888"/><path d="M805.5 168V170" stroke="#888"/><path d="M809.5 162V170" stroke="#666"/><text x="811.5" y="166" font-size="9.5" fill="#666" font-family="Liberation Sans">16</text><path d="M813.5 168V170" stroke="#888"/><path d="M817.5 168V170" stroke="#888"/><path d="M821.5 168V170" stroke="#888"/><path d="M824.5 168V170" stroke="#888"/><path d="M828.5 165.5V170" stroke="#777"/><path d="M832.5 168V170" stroke="#888"/><path d="M836.5 168V170" stroke="#888"/><path d="M839.5 168V170" stroke="#888"/><path d="M843.5 168V170" stroke="#888"/><path d="M847.5 162V170" stroke="#666"/><text x="849.5" y="166" font-size="9.5" fill="#666" font-family="Liberation Sans">17</text><path d="M851.5 168V170" stroke="#888"/><path d="M855.5 168V170" stroke="#888"/><path d="M858.5 168V170" stroke="#888"/><path d="M862.5 168V170" stroke="#888"/><path d="M866.5 165.5V170" stroke="#777"/><path d="M870.5 168V170" stroke="#888"/><path d="M873.5 168V170" stroke="#888"/><path d="M877.5 168V170" stroke="#888"/><path d="M881.5 168V170" stroke="#888"/><path d="M885.5 162V170" stroke="#666"/><text x="887.5" y="166" font-size="9.5" fill="#666" font-family="Liberation Sans">18</text><path d="M889.5 168V170" stroke="#888"/><path d="M892.5 168V170" stroke="#888"/><path d="M896.5 168V170" stroke="#888"/><path d="M900.5 168V170" stroke="#888"/><path d="M904.5 165.5V170" stroke="#777"/><path d="M907.5 168V170" stroke="#888"/><path d="M911.5 168V170" stroke="#888"/><path d="M915.5 168V170" stroke="#888"/><path d="M919.5 168V170" stroke="#888"/><path d="M923.5 162V170" stroke="#666"/><text x="925.5" y="166" font-size="9.5" fill="#666" font-family="Liberation Sans">19</text><path d="M926.5 168V170" stroke="#888"/><path d="M930.5 168V170" stroke="#888"/><path d="M934.5 168V170" stroke="#888"/><path d="M938.5 168V170" stroke="#888"/><path d="M941.5 165.5V170" stroke="#777"/><path d="M945.5 168V170" stroke="#888"/><path d="M949.5 168V170" stroke="#888"/><path d="M953.5 168V170" stroke="#888"/><path d="M957.5 168V170" stroke="#888"/><path d="M960.5 162V170" stroke="#666"/><text x="962.5" y="166" font-size="9.5" fill="#666" font-family="Liberation Sans">20</text><path d="M964.5 168V170" stroke="#888"/><path d="M968.5 168V170" stroke="#888"/><path d="M972.5 168V170" stroke="#888"/><path d="M976.5 168V170" stroke="#888"/><path d="M979.5 165.5V170" stroke="#777"/><path d="M983.5 168V170" stroke="#888"/><path d="M987.5 168V170" stroke="#888"/><path d="M991.5 168V170" stroke="#888"/><path d="M994.5 168V170" stroke="#888"/><path d="M998.5 162V170" stroke="#666"/><text x="1000.5" y="166" font-size="9.5" fill="#666" font-family="Liberation Sans">21</text><path d="M1002.5 168V170" stroke="#888"/><path d="M1006.5 168V170" stroke="#888"/><path d="M1010.5 168V170" stroke="#888"/><path d="M1013.5 168V170" stroke="#888"/><path d="M1017.5 165.5V170" stroke="#777"/><path d="M1021.5 168V170" stroke="#888"/><path d="M1025.5 168V170" stroke="#888"/><path d="M1028.5 168V170" stroke="#888"/><path d="M1032.5 168V170" stroke="#888"/><path d="M1036.5 162V170" stroke="#666"/><text x="1038.5" y="166" font-size="9.5" fill="#666" font-family="Liberation Sans">22</text><path d="M1040.5 168V170" stroke="#888"/><path d="M1044.5 168V170" stroke="#888"/><path d="M1047.5 168V170" stroke="#888"/><path d="M1051.5 168V170" stroke="#888"/><path d="M1055.5 165.5V170" stroke="#777"/><path d="M1059.5 168V170" stroke="#888"/><path d="M1062.5 168V170" stroke="#888"/><path d="M1066.5 168V170" stroke="#888"/><path d="M1070.5 168V170" stroke="#888"/><path d="M1074.5 162V170" stroke="#666"/><text x="1076.5" y="166" font-size="9.5" fill="#666" font-family="Liberation Sans">23</text><path d="M1078.5 168V170" stroke="#888"/><path d="M1081.5 168V170" stroke="#888"/><path d="M1085.5 168V170" stroke="#888"/><path d="M1089.5 168V170" stroke="#888"/><path d="M1093.5 165.5V170" stroke="#777"/><path d="M1096.5 168V170" stroke="#888"/><path d="M1100.5 168V170" stroke="#888"/><path d="M1104.5 168V170" stroke="#888"/><path d="M1108.5 168V170" stroke="#888"/><path d="M1112.5 162V170" stroke="#666"/><text x="1114.5" y="166" font-size="9.5" fill="#666" font-family="Liberation Sans">24</text><path d="M1115.5 168V170" stroke="#888"/><path d="M1119.5 168V170" stroke="#888"/><path d="M1123.5 168V170" stroke="#888"/><path d="M1127.5 168V170" stroke="#888"/><path d="M1130.5 165.5V170" stroke="#777"/><path d="M1134.5 168V170" stroke="#888"/><path d="M1138.5 168V170" stroke="#888"/><path d="M1142.5 168V170" stroke="#888"/><path d="M1146.5 168V170" stroke="#888"/><path d="M1149.5 162V170" stroke="#666"/><text x="1151.5" y="166" font-size="9.5" fill="#666" font-family="Liberation Sans">25</text><path d="M1153.5 168V170" stroke="#888"/><path d="M1157.5 168V170" stroke="#888"/><path d="M1161.5 168V170" stroke="#888"/><path d="M1165.5 168V170" stroke="#888"/><path d="M1168.5 165.5V170" stroke="#777"/><path d="M1172.5 168V170" stroke="#888"/><path d="M1176.5 168V170" stroke="#888"/><path d="M1180.5 168V170" stroke="#888"/><path d="M1183.5 168V170" stroke="#888"/><path d="M1187.5 162V170" stroke="#666"/><text x="1189.5" y="166" font-size="9.5" fill="#666" font-family="Liberation Sans">26</text><path d="M1191.5 168V170" stroke="#888"/><path d="M1195.5 168V170" stroke="#888"/><path d="M1199.5 168V170" stroke="#888"/><path d="M1202.5 168V170" stroke="#888"/><path d="M1206.5 165.5V170" stroke="#777"/><path d="M1210.5 168V170" stroke="#888"/><path d="M1214.5 168V170" stroke="#888"/><path d="M1217.5 168V170" stroke="#888"/><path d="M1221.5 168V170" stroke="#888"/><path d="M1225.5 162V170" stroke="#666"/><text x="1227.5" y="166" font-size="9.5" fill="#666" font-family="Liberation Sans">27</text><path d="M1229.5 168V170" stroke="#888"/><path d="M1233.5 168V170" stroke="#888"/><path d="M1236.5 168V170" stroke="#888"/><path d="M1240.5 168V170" stroke="#888"/><path d="M1244.5 165.5V170" stroke="#777"/><path d="M1248.5 168V170" stroke="#888"/><path d="M1251.5 168V170" stroke="#888"/><path d="M1255.5 168V170" stroke="#888"/><path d="M1259.5 168V170" stroke="#888"/><path d="M1263.5 162V170" stroke="#666"/><text x="1265.5" y="166" font-size="9.5" fill="#666" font-family="Liberation Sans">28</text><path d="M1267.5 168V170" stroke="#888"/><path d="M1270.5 168V170" stroke="#888"/><path d="M1274.5 168V170" stroke="#888"/><path d="M1278.5 168V170" stroke="#888"/><path d="M1282.5 165.5V170" stroke="#777"/><path d="M1285.5 168V170" stroke="#888"/><path d="M1289.5 168V170" stroke="#888"/><path d="M1293.5 168V170" stroke="#888"/><path d="M204 160L210 165L204 170Z" fill="#c4c4c4"/></svg>
<div class="a" style="left:208px;top:179px;width:15px;height:656px;background:#fdfdfd"></div>
<svg style="left:0;top:0" width="1600" height="900" viewBox="0 0 1600 900"><path d="M212 180.5H220" stroke="#666"/><path d="M218 183.5H220" stroke="#888"/><path d="M218 187.5H220" stroke="#888"/><path d="M218 191.5H220" stroke="#888"/><path d="M218 195.5H220" stroke="#888"/><path d="M215.5 198.5H220" stroke="#777"/><path d="M218 202.5H220" stroke="#888"/><path d="M218 206.5H220" stroke="#888"/><path d="M218 210.5H220" stroke="#888"/><path d="M218 214.5H220" stroke="#888"/><path d="M212 217.5H220" stroke="#666"/><text transform="translate(215 219.5) rotate(-90)" text-anchor="end" font-size="9.5" fill="#666" font-family="Liberation Sans">1</text><path d="M218 221.5H220" stroke="#888"/><path d="M218 225.5H220" stroke="#888"/><path d="M218 229.5H220" stroke="#888"/><path d="M218 232.5H220" stroke="#888"/><path d="M215.5 236.5H220" stroke="#777"/><path d="M218 240.5H220" stroke="#888"/><path d="M218 244.5H220" stroke="#888"/><path d="M218 248.5H220" stroke="#888"/><path d="M218 251.5H220" stroke="#888"/><path d="M212 255.5H220" stroke="#666"/><text transform="translate(215 257.5) rotate(-90)" text-anchor="end" font-size="9.5" fill="#666" font-family="Liberation Sans">2</text><path d="M218 259.5H220" stroke="#888"/><path d="M218 263.5H220" stroke="#888"/><path d="M218 266.5H220" stroke="#888"/><path d="M218 270.5H220" stroke="#888"/><path d="M215.5 274.5H220" stroke="#777"/><path d="M218 278.5H220" stroke="#888"/><path d="M218 282.5H220" stroke="#888"/><path d="M218 285.5H220" stroke="#888"/><path d="M218 289.5H220" stroke="#888"/><path d="M212 293.5H220" stroke="#666"/><text transform="translate(215 295.5) rotate(-90)" text-anchor="end" font-size="9.5" fill="#666" font-family="Liberation Sans">3</text><path d="M218 297.5H220" stroke="#888"/><path d="M218 300.5H220" stroke="#888"/><path d="M218 304.5H220" stroke="#888"/><path d="M218 308.5H220" stroke="#888"/><path d="M215.5 312.5H220" stroke="#777"/><path d="M218 316.5H220" stroke="#888"/><path d="M218 319.5H220" stroke="#888"/><path d="M218 323.5H220" stroke="#888"/><path d="M218 327.5H220" stroke="#888"/><path d="M212 331.5H220" stroke="#666"/><text transform="translate(215 333.5) rotate(-90)" text-anchor="end" font-size="9.5" fill="#666" font-family="Liberation Sans">4</text><path d="M218 334.5H220" stroke="#888"/><path d="M218 338.5H220" stroke="#888"/><path d="M218 342.5H220" stroke="#888"/><path d="M218 346.5H220" stroke="#888"/><path d="M215.5 350.5H220" stroke="#777"/><path d="M218 353.5H220" stroke="#888"/><path d="M218 357.5H220" stroke="#888"/><path d="M218 361.5H220" stroke="#888"/><path d="M218 365.5H220" stroke="#888"/><path d="M212 368.5H220" stroke="#666"/><text transform="translate(215 370.5) rotate(-90)" text-anchor="end" font-size="9.5" fill="#666" font-family="Liberation Sans">5</text><path d="M218 372.5H220" stroke="#888"/><path d="M218 376.5H220" stroke="#888"/><path d="M218 380.5H220" stroke="#888"/><path d="M218 384.5H220" stroke="#888"/><path d="M215.5 387.5H220" stroke="#777"/><path d="M218 391.5H220" stroke="#888"/><path d="M218 395.5H220" stroke="#888"/><path d="M218 399.5H220" stroke="#888"/><path d="M218 403.5H220" stroke="#888"/><path d="M212 406.5H220" stroke="#666"/><text transform="translate(215 408.5) rotate(-90)" text-anchor="end" font-size="9.5" fill="#666" font-family="Liberation Sans">6</text><path d="M218 410.5H220" stroke="#888"/><path d="M218 414.5H220" stroke="#888"/><path d="M218 418.5H220" stroke="#888"/><path d="M218 421.5H220" stroke="#888"/><path d="M215.5 425.5H220" stroke="#777"/><path d="M218 429.5H220" stroke="#888"/><path d="M218 433.5H220" stroke="#888"/><path d="M218 437.5H220" stroke="#888"/><path d="M218 440.5H220" stroke="#888"/><path d="M212 444.5H220" stroke="#666"/><text transform="translate(215 446.5) rotate(-90)" text-anchor="end" font-size="9.5" fill="#666" font-family="Liberation Sans">7</text><path d="M218 448.5H220" stroke="#888"/><path d="M218 452.5H220" stroke="#888"/><path d="M218 455.5H220" stroke="#888"/><path d="M218 459.5H220" stroke="#888"/><path d="M215.5 463.5H220" stroke="#777"/><path d="M218 467.5H220" stroke="#888"/><path d="M218 471.5H220" stroke="#888"/><path d="M218 474.5H220" stroke="#888"/><path d="M218 478.5H220" stroke="#888"/><path d="M212 482.5H220" stroke="#666"/><text transform="translate(215 484.5) rotate(-90)" text-anchor="end" font-size="9.5" fill="#666" font-family="Liberation Sans">8</text><path d="M218 486.5H220" stroke="#888"/><path d="M218 489.5H220" stroke="#888"/><path d="M218 493.5H220" stroke="#888"/><path d="M218 497.5H220" stroke="#888"/><path d="M215.5 501.5H220" stroke="#777"/><path d="M218 505.5H220" stroke="#888"/><path d="M218 508.5H220" stroke="#888"/><path d="M218 512.5H220" stroke="#888"/><path d="M218 516.5H220" stroke="#888"/><path d="M212 520.5H220" stroke="#666"/><text transform="translate(215 522.5) rotate(-90)" text-anchor="end" font-size="9.5" fill="#666" font-family="Liberation Sans">9</text><path d="M218 523.5H220" stroke="#888"/><path d="M218 527.5H220" stroke="#888"/><path d="M218 531.5H220" stroke="#888"/><path d="M218 535.5H220" stroke="#888"/><path d="M215.5 539.5H220" stroke="#777"/><path d="M218 542.5H220" stroke="#888"/><path d="M218 546.5H220" stroke="#888"/><path d="M218 550.5H220" stroke="#888"/><path d="M218 554.5H220" stroke="#888"/><path d="M212 558.5H220" stroke="#666"/><text transform="translate(215 560.5) rotate(-90)" text-anchor="end" font-size="9.5" fill="#666" font-family="Liberation Sans">10</text><path d="M218 561.5H220" stroke="#888"/><path d="M218 565.5H220" stroke="#888"/><path d="M218 569.5H220" stroke="#888"/><path d="M218 573.5H220" stroke="#888"/><path d="M215.5 576.5H220" stroke="#777"/><path d="M218 580.5H220" stroke="#888"/><path d="M218 584.5H220" stroke="#888"/><path d="M218 588.5H220" stroke="#888"/><path d="M218 592.5H220" stroke="#888"/><path d="M212 595.5H220" stroke="#666"/><text transform="translate(215 597.5) rotate(-90)" text-anchor="end" font-size="9.5" fill="#666" font-family="Liberation Sans">11</text><path d="M218 599.5H220" stroke="#888"/><path d="M218 603.5H220" stroke="#888"/><path d="M218 607.5H220" stroke="#888"/><path d="M218 610.5H220" stroke="#888"/><path d="M215.5 614.5H220" stroke="#777"/><path d="M218 618.5H220" stroke="#888"/><path d="M218 622.5H220" stroke="#888"/><path d="M218 626.5H220" stroke="#888"/><path d="M218 629.5H220" stroke="#888"/><path d="M212 633.5H220" stroke="#666"/><text transform="translate(215 635.5) rotate(-90)" text-anchor="end" font-size="9.5" fill="#666" font-family="Liberation Sans">12</text><path d="M218 637.5H220" stroke="#888"/><path d="M218 641.5H220" stroke="#888"/><path d="M218 644.5H220" stroke="#888"/><path d="M218 648.5H220" stroke="#888"/><path d="M215.5 652.5H220" stroke="#777"/><path d="M218 656.5H220" stroke="#888"/><path d="M218 660.5H220" stroke="#888"/><path d="M218 663.5H220" stroke="#888"/><path d="M218 667.5H220" stroke="#888"/><path d="M212 671.5H220" stroke="#666"/><text transform="translate(215 673.5) rotate(-90)" text-anchor="end" font-size="9.5" fill="#666" font-family="Liberation Sans">13</text><path d="M218 675.5H220" stroke="#888"/><path d="M218 678.5H220" stroke="#888"/><path d="M218 682.5H220" stroke="#888"/><path d="M218 686.5H220" stroke="#888"/><path d="M215.5 690.5H220" stroke="#777"/><path d="M218 694.5H220" stroke="#888"/><path d="M218 697.5H220" stroke="#888"/><path d="M218 701.5H220" stroke="#888"/><path d="M218 705.5H220" stroke="#888"/><path d="M212 709.5H220" stroke="#666"/><text transform="translate(215 711.5) rotate(-90)" text-anchor="end" font-size="9.5" fill="#666" font-family="Liberation Sans">14</text><path d="M218 712.5H220" stroke="#888"/><path d="M218 716.5H220" stroke="#888"/><path d="M218 720.5H220" stroke="#888"/><path d="M218 724.5H220" stroke="#888"/><path d="M215.5 728.5H220" stroke="#777"/><path d="M218 731.5H220" stroke="#888"/><path d="M218 735.5H220" stroke="#888"/><path d="M218 739.5H220" stroke="#888"/><path d="M218 743.5H220" stroke="#888"/><path d="M212 746.5H220" stroke="#666"/><text transform="translate(215 748.5) rotate(-90)" text-anchor="end" font-size="9.5" fill="#666" font-family="Liberation Sans">15</text><path d="M218 750.5H220" stroke="#888"/><path d="M218 754.5H220" stroke="#888"/><path d="M218 758.5H220" stroke="#888"/><path d="M218 762.5H220" stroke="#888"/><path d="M215.5 765.5H220" stroke="#777"/><path d="M218 769.5H220" stroke="#888"/><path d="M218 773.5H220" stroke="#888"/><path d="M218 777.5H220" stroke="#888"/><path d="M218 781.5H220" stroke="#888"/><path d="M212 784.5H220" stroke="#666"/><text transform="translate(215 786.5) rotate(-90)" text-anchor="end" font-size="9.5" fill="#666" font-family="Liberation Sans">16</text><path d="M218 788.5H220" stroke="#888"/><path d="M218 792.5H220" stroke="#888"/><path d="M218 796.5H220" stroke="#888"/><path d="M218 799.5H220" stroke="#888"/><path d="M215.5 803.5H220" stroke="#777"/><path d="M218 807.5H220" stroke="#888"/><path d="M218 811.5H220" stroke="#888"/><path d="M218 815.5H220" stroke="#888"/><path d="M218 818.5H220" stroke="#888"/></svg>
<svg style="left:0;top:0" width="1600" height="900" viewBox="0 0 1600 900"><path d="M212 822.5H220" stroke="#666"/><text transform="translate(215 824.5) rotate(-90)" text-anchor="end" font-size="9.5" fill="#666" font-family="Liberation Sans">17</text><path d="M218 826.5H220M218 830.5H220" stroke="#888"/></svg>
<div class="a" style="left:229px;top:179px;width:1051px;height:656px;background:#d8d8d8;overflow:hidden">
  <div class="a" style="left:128px;top:0;width:2px;height:656px;background:#111"></div>
  <div class="a" style="left:130px;top:0;width:793px;height:656px;background:#fff"></div>
  <div class="a" style="left:923px;top:0;width:9px;height:656px;background:linear-gradient(to right,#000 0,#222 1px,#888 6px,#cfcfcf 8px,#d8d8d8 9px)"></div>
</div>
<!-- vscroll -->
<div class="a" style="left:1279px;top:180px;width:18px;height:655px;background:#f0f0f0;border-left:1px solid #fff;border-right:1px solid #e3e3e3"></div>
<div class="a" style="left:1280px;top:322px;width:15px;height:338px;background:#cbcbcb"></div>
<svg style="left:1282px;top:184px" width="12" height="10"><path d="M2.5 7L6 3.5L9.5 7" fill="none" stroke="#555" stroke-width="2"/></svg>
<svg style="left:1282px;top:821px" width="12" height="10"><path d="M2.5 3L6 6.5L9.5 3" fill="none" stroke="#555" stroke-width="2"/></svg>
<!-- PAGE CONTENT -->
<div class="a" style="left:434px;top:187px;width:252px;height:12px;background:#c3c3c3"></div>
<div class="a" style="left:434px;top:186px;font-size:9.2px;color:#000;-webkit-text-stroke:0.2px #000">Sample Company · Sample street 1245 · 12345 Sample town</div>
<div class="a" style="left:434px;top:200px;font-size:12px;color:#000">John Doe</div>
<div class="a" style="left:434px;top:213px;font-size:12px;color:#000">127 Anywhere Street</div>
<div class="a" style="left:816px;top:205px;width:260px;height:18px;border:1px solid #000"></div>
<div class="a" style="left:819px;top:205px;font-size:12px;color:#000">Customer No.</div>
<div class="a" style="left:913px;top:205px;font-size:12px;color:#000">10000</div>
<div class="a" style="left:534px;top:680px;font-size:12px;font-weight:bold;color:#000">Final settlement amount...</div>
<div class="a" style="left:976px;top:680px;width:100px;text-align:right;font-size:12px;font-weight:bold;color:#000">10,705.27</div>
<div class="a" style="left:434px;top:716px;width:645px;height:92px;border:1px solid #000"></div>
<div class="a" style="left:807px;top:716px;width:1px;height:92px;background:#000"></div>
<div class="a" style="left:438px;top:724px;font-size:12px;font-weight:bold;color:#000">Payment terms:</div>
<div class="a" style="left:435px;top:745px;font-size:12px;color:#000">Within 7 days with 2.00% discount or within 14 days in total.</div>
<div class="a" style="left:812px;top:722px;font-size:12px;font-weight:bold;color:#000">Total net</div>
<div class="a" style="left:973px;top:722px;width:100px;text-align:right;font-size:12px;font-weight:bold;color:#000">10,705.27</div>
<div class="a" style="left:812px;top:744px;font-size:12px;color:#000">VAT 0 %</div>
<div class="a" style="left:901px;top:744px;font-size:11px;color:#000">on 0.00 €</div>
<div class="a" style="left:973px;top:744px;width:100px;text-align:right;font-size:12px;color:#000">0.00</div>
<div class="a" style="left:812px;top:765px;font-size:12px;color:#000">VAT 0 %</div>
<div class="a" style="left:901px;top:765px;font-size:11px;color:#000">on 0.00 €</div>
<div class="a" style="left:973px;top:765px;width:100px;text-align:right;font-size:12px;color:#000">0.00</div>
<div class="a" style="left:812px;top:787px;font-size:12px;font-weight:bold;color:#000">Gross total</div>
<div class="a" style="left:973px;top:787px;width:100px;text-align:right;font-size:12px;font-weight:bold;color:#000">10,705.27</div>

<!-- DIALOG -->
<div class="a" style="left:382px;top:220px;width:836px;height:454px;background:#f7f7f7;border:1px solid #a9a9a9;box-shadow:1px 2px 14px rgba(0,0,0,0.32)"></div>
<div class="a" style="left:383px;top:221px;width:834px;height:30px;background:#fff"></div>
<svg style="left:390px;top:227px" width="18" height="18" viewBox="0 0 18 18"><circle cx="9" cy="9" r="7.5" fill="none" stroke="#aaa" stroke-width="1"/><path d="M8 1.5L6.5 16.5M10.5 1.5L9 16.5" stroke="#aaa" stroke-width="1"/></svg>
<div class="a" style="left:412px;top:229px;font-size:12px;color:#999">Project history</div>
<svg style="left:1196px;top:229px" width="13" height="13"><path d="M1 1.5L11 11.5M11 1.5L1 11.5" stroke="#7a7a7a" stroke-width="1"/></svg>
<div class="a" style="left:405px;top:265px;color:#333">Project</div>
<div class="a" style="left:463px;top:261px;width:240px;height:21px;background:#fff;border:1px solid #7a7a7a"></div>
<div class="a" style="left:709px;top:261px;width:23px;height:23px;background:#f7f7f7;border:1px solid #a5a5a5"></div>
<svg style="left:709px;top:261px" width="23" height="23"><path d="M11.5 4.5V18.5M4 12H19" stroke="#1c9a3c" stroke-width="1.2"/></svg>
<div class="a" style="left:736px;top:261px;width:23px;height:23px;background:#f7f7f7;border:1px solid #a5a5a5"></div>
<svg style="left:736px;top:261px" width="23" height="23"><path d="M5.5 5.5L17.5 17.5M17.5 5.5L5.5 17.5" stroke="#e8403f" stroke-width="1.2"/></svg>
<!-- grid -->
<div class="a" style="left:388px;top:288px;width:826px;height:353px;background:#fff;border:1px solid #a0a0a0"></div>
<div class="a" style="left:389px;top:289px;width:824px;height:23px;background:#f7f7f7;border-bottom:1px solid #a5a5a5"></div>
<div class="a" style="left:542px;top:292px;width:1px;height:18px;background:#c8c8c8"></div>
<div class="a" style="left:696px;top:292px;width:1px;height:18px;background:#c8c8c8"></div>
<div class="a" style="left:799px;top:292px;width:1px;height:18px;background:#c8c8c8"></div>
<div class="a" style="left:1056px;top:292px;width:1px;height:18px;background:#c8c8c8"></div>
<div class="a" style="left:391px;top:293px;color:#333">Project document</div>
<div class="a" style="left:545px;top:293px;color:#333">DocNo.</div>
<svg style="left:680px;top:295px" width="11" height="7"><path d="M1 6H10L5.5 1Z" fill="#888"/></svg>
<div class="a" style="left:699px;top:293px;color:#333">Date</div>
<div class="a" style="left:802px;top:293px;color:#333">Project</div>
<div class="a" style="left:1059px;top:293px;color:#333">Customer</div>
<div class="a" style="left:389px;top:312px;width:824px;height:19px;background:#cce4f7;border-bottom:1px solid #d5d5d5"></div>
<div class="a" style="left:389px;top:331px;width:824px;height:20px;background:#fff;border-bottom:1px solid #d5d5d5"></div>
<div class="a" style="left:542px;top:312px;width:1px;height:39px;background:#d8d8d8"></div>
<div class="a" style="left:696px;top:312px;width:1px;height:39px;background:#d8d8d8"></div>
<div class="a" style="left:799px;top:312px;width:1px;height:39px;background:#d8d8d8"></div>
<div class="a" style="left:1056px;top:312px;width:1px;height:39px;background:#d8d8d8"></div>
<div class="a" style="left:697px;top:312px;width:102px;height:19px;border:1px dotted #333"></div>
<div class="a" style="left:391px;top:314px;color:#222">Orderconfirmation</div>
<div class="a" style="left:545px;top:314px;color:#222">O201906/0061</div>
<div class="a" style="left:699px;top:314px;color:#222">6/20/2019</div>
<div class="a" style="left:1059px;top:314px;color:#222">John Doe</div>
<div class="a" style="left:391px;top:334px;color:#222">Quotation</div>
<div class="a" style="left:545px;top:334px;color:#222">Q201906/0031</div>
<div class="a" style="left:699px;top:334px;color:#222">6/13/2019</div>
<div class="a" style="left:1059px;top:334px;color:#222">John Doe</div>
<div class="a" style="left:1009px;top:648px;width:98px;height:21px;background:#e1e1e1;border:1px solid #adadad"></div>
<div class="a" style="left:1009px;top:652px;width:98px;text-align:center;color:#222">OK</div>
<div class="a" style="left:1115px;top:648px;width:98px;height:21px;background:#e1e1e1;border:1px solid #adadad"></div>
<div class="a" style="left:1115px;top:652px;width:98px;text-align:center;color:#222">Abort</div>


<!-- PROPERTY GRID -->
<div class="a" style="left:1297px;top:153px;width:301px;height:683px;background:#e9eaec;border-left:1px solid #d0d0d0;border-top:1px solid #d8d8d8;overflow:hidden">
<div class="a" style="left:-1298px;top:-154px;width:1600px;height:900px">
<div class="a" style="left:1298px;top:154px;width:281px;height:21px;background:#e7e8ea"></div>
<div class="a" style="left:1318px;top:158px;font-weight:bold;font-size:12px;color:#b5b5b5">Miscellaneous</div>
<svg style="left:1565px;top:161px" width="11" height="7"><path d="M1 5.5L5 1.5L9 5.5" fill="none" stroke="#cfcfcf" stroke-width="1.2"/></svg>
<div class="a" style="left:1314px;top:175px;width:265px;height:19px;background:#edeef0;border-left:1px solid #dcdde0;border-top:1px solid #dcdde0"></div>
<div class="a" style="left:1439px;top:175px;width:1px;height:19px;background:#dcdde0"></div>
<div class="a" style="left:1332px;top:178px;color:#a3a3e6">Name</div>
<div class="a" style="left:1444px;top:178px;color:#cbcbcb">Closing invoice</div>
<div class="a" style="left:1314px;top:194px;width:265px;height:19px;background:#edeef0;border-left:1px solid #dcdde0;border-top:1px solid #dcdde0"></div>
<div class="a" style="left:1439px;top:194px;width:1px;height:19px;background:#dcdde0"></div>
<div class="a" style="left:1332px;top:197px;color:#a3a3e6">Number</div>
<div class="a" style="left:1444px;top:197px;color:#cbcbcb">IV201912/0017</div>
<div class="a" style="left:1314px;top:213px;width:265px;height:19px;background:#edeef0;border-left:1px solid #dcdde0;border-top:1px solid #dcdde0"></div>
<div class="a" style="left:1439px;top:213px;width:1px;height:19px;background:#dcdde0"></div>
<div class="a" style="left:1332px;top:216px;color:#9d9d9d">Project</div>
<svg style="left:1566px;top:220px" width="9" height="6"><path d="M0.5 0.5H8L4.25 4.5Z" fill="#b0b0b0"/></svg>
<div class="a" style="left:1314px;top:232px;width:265px;height:19px;background:#edeef0;border-left:1px solid #dcdde0;border-top:1px solid #dcdde0"></div>
<div class="a" style="left:1439px;top:232px;width:1px;height:19px;background:#dcdde0"></div>
<div class="a" style="left:1332px;top:235px;color:#9d9d9d">Printed on</div>
<div class="a" style="left:1444px;top:235px;color:#a3a3a3">12/20/2019</div>
<svg style="left:1566px;top:239px" width="9" height="6"><path d="M0.5 0.5H8L4.25 4.5Z" fill="#b0b0b0"/></svg>
<div class="a" style="left:1314px;top:251px;width:265px;height:19px;background:#edeef0;border-left:1px solid #dcdde0;border-top:1px solid #dcdde0"></div>
<div class="a" style="left:1439px;top:251px;width:1px;height:19px;background:#dcdde0"></div>
<div class="a" style="left:1332px;top:254px;color:#a3a3e6">Contact</div>
<div class="a" style="left:1444px;top:254px;color:#cbcbcb">Doe, John</div>
<svg style="left:1564px;top:259px" width="12" height="4"><rect x="0.5" y="0.5" width="2" height="2" fill="#888"/><rect x="4.5" y="0.5" width="2" height="2" fill="#888"/><rect x="8.5" y="0.5" width="2" height="2" fill="#888"/></svg>
<div class="a" style="left:1314px;top:270px;width:265px;height:19px;background:#edeef0;border-left:1px solid #dcdde0;border-top:1px solid #dcdde0"></div>
<div class="a" style="left:1439px;top:270px;width:1px;height:19px;background:#dcdde0"></div>
<div class="a" style="left:1332px;top:273px;color:#a3a3e6">Project template</div>
<div class="a" style="left:1444px;top:273px;color:#cbcbcb">Invoice</div>
<svg style="left:1566px;top:277px" width="9" height="6"><path d="M0.5 0.5H8L4.25 4.5Z" fill="#b0b0b0"/></svg>
<div class="a" style="left:1314px;top:289px;width:265px;height:19px;background:#edeef0;border-left:1px solid #dcdde0;border-top:1px solid #dcdde0"></div>
<div class="a" style="left:1439px;top:289px;width:1px;height:19px;background:#dcdde0"></div>
<div class="a" style="left:1332px;top:292px;color:#9d9d9d">Contact person</div>
<div class="a" style="left:1444px;top:292px;color:#a3a3a3">Anton Admin</div>
<svg style="left:1566px;top:296px" width="9" height="6"><path d="M0.5 0.5H8L4.25 4.5Z" fill="#b0b0b0"/></svg>
<div class="a" style="left:1314px;top:308px;width:265px;height:19px;background:#edeef0;border-left:1px solid #dcdde0;border-top:1px solid #dcdde0"></div>
<div class="a" style="left:1439px;top:308px;width:1px;height:19px;background:#dcdde0"></div>
<div class="a" style="left:1332px;top:311px;color:#9d9d9d">Representative</div>
<div class="a" style="left:1444px;top:311px;color:#a3a3a3">Ronald Rich</div>
<svg style="left:1566px;top:315px" width="9" height="6"><path d="M0.5 0.5H8L4.25 4.5Z" fill="#b0b0b0"/></svg>
<div class="a" style="left:1314px;top:327px;width:265px;height:19px;background:#edeef0;border-left:1px solid #dcdde0;border-top:1px solid #dcdde0"></div>
<div class="a" style="left:1439px;top:327px;width:1px;height:19px;background:#dcdde0"></div>
<div class="a" style="left:1332px;top:330px;color:#9d9d9d">Trip</div>
<div class="a" style="left:1444px;top:330px;color:#a3a3a3">Wednesday</div>
<svg style="left:1566px;top:334px" width="9" height="6"><path d="M0.5 0.5H8L4.25 4.5Z" fill="#b0b0b0"/></svg>
<div class="a" style="left:1314px;top:346px;width:265px;height:19px;background:#edeef0;border-left:1px solid #dcdde0;border-top:1px solid #dcdde0"></div>
<div class="a" style="left:1439px;top:346px;width:1px;height:19px;background:#dcdde0"></div>
<div class="a" style="left:1332px;top:349px;color:#9d9d9d">Project state</div>
<svg style="left:1566px;top:353px" width="9" height="6"><path d="M0.5 0.5H8L4.25 4.5Z" fill="#b0b0b0"/></svg>
<div class="a" style="left:1314px;top:365px;width:265px;height:19px;background:#edeef0;border-left:1px solid #dcdde0;border-top:1px solid #dcdde0"></div>
<div class="a" style="left:1439px;top:365px;width:1px;height:19px;background:#dcdde0"></div>
<div class="a" style="left:1332px;top:368px;color:#9d9d9d">Project text</div>
<svg style="left:1566px;top:372px" width="9" height="6"><path d="M0.5 0.5H8L4.25 4.5Z" fill="#b0b0b0"/></svg>
<div class="a" style="left:1314px;top:384px;width:265px;height:19px;background:#edeef0;border-left:1px solid #dcdde0;border-top:1px solid #dcdde0"></div>
<div class="a" style="left:1439px;top:384px;width:1px;height:19px;background:#dcdde0"></div>
<div class="a" style="left:1332px;top:387px;color:#9d9d9d">Notes</div>
<svg style="left:1566px;top:391px" width="9" height="6"><path d="M0.5 0.5H8L4.25 4.5Z" fill="#b0b0b0"/></svg>
<div class="a" style="left:1298px;top:403px;width:281px;height:21px;background:#e7e8ea;border-top:1px solid #dcdde0"></div>
<div class="a" style="left:1318px;top:407px;font-weight:bold;font-size:12px;color:#b5b5b5">Addresses</div>
<svg style="left:1565px;top:411px" width="11" height="7"><path d="M1 1.5L5 5.5L9 1.5" fill="none" stroke="#cfcfcf" stroke-width="1.2"/></svg>
<div class="a" style="left:1298px;top:424px;width:281px;height:21px;background:#e7e8ea;border-top:1px solid #dcdde0"></div>
<div class="a" style="left:1318px;top:428px;font-weight:bold;font-size:12px;color:#b5b5b5">Amounts</div>
<svg style="left:1565px;top:431px" width="11" height="7"><path d="M1 5.5L5 1.5L9 5.5" fill="none" stroke="#cfcfcf" stroke-width="1.2"/></svg>
<div class="a" style="left:1314px;top:445px;width:265px;height:19px;background:#edeef0;border-left:1px solid #dcdde0;border-top:1px solid #dcdde0"></div>
<div class="a" style="left:1439px;top:445px;width:1px;height:19px;background:#dcdde0"></div>
<div class="a" style="left:1332px;top:448px;color:#c2c2c2">Purchase price</div>
<div class="a" style="left:1440px;top:448px;width:136px;text-align:right;color:#cbcbcb">$0.00</div>
<div class="a" style="left:1314px;top:464px;width:265px;height:19px;background:#edeef0;border-left:1px solid #dcdde0;border-top:1px solid #dcdde0"></div>
<div class="a" style="left:1439px;top:464px;width:1px;height:19px;background:#dcdde0"></div>
<div class="a" style="left:1332px;top:467px;color:#a3a3e6">Net price</div>
<div class="a" style="left:1440px;top:467px;width:136px;text-align:right;color:#cbcbcb">$10,705.27</div>
<div class="a" style="left:1314px;top:483px;width:265px;height:19px;background:#edeef0;border-left:1px solid #dcdde0;border-top:1px solid #dcdde0"></div>
<div class="a" style="left:1439px;top:483px;width:1px;height:19px;background:#dcdde0"></div>
<div class="a" style="left:1332px;top:486px;color:#a3a3e6">Gross price</div>
<div class="a" style="left:1440px;top:486px;width:136px;text-align:right;color:#cbcbcb">$10,705.27</div>
<div class="a" style="left:1314px;top:502px;width:265px;height:19px;background:#edeef0;border-left:1px solid #dcdde0;border-top:1px solid #dcdde0"></div>
<div class="a" style="left:1439px;top:502px;width:1px;height:19px;background:#dcdde0"></div>
<div class="a" style="left:1332px;top:505px;color:#a3a3e6">VAT</div>
<svg style="left:1317px;top:510px" width="8" height="5"><path d="M0.5 0.5H7L3.75 4Z" fill="#c4c4c4"/></svg>
<div class="a" style="left:1440px;top:505px;width:136px;text-align:right;color:#cbcbcb">$0.00</div>
<div class="a" style="left:1314px;top:521px;width:265px;height:19px;background:#edeef0;border-left:1px solid #dcdde0;border-top:1px solid #dcdde0"></div>
<div class="a" style="left:1439px;top:521px;width:1px;height:19px;background:#dcdde0"></div>
<div class="a" style="left:1348px;top:524px;color:#c2c2c2">VAT 0%</div>
<div class="a" style="left:1440px;top:524px;width:136px;text-align:right;color:#cbcbcb">$0.00</div>
<div class="a" style="left:1314px;top:540px;width:265px;height:19px;background:#edeef0;border-left:1px solid #dcdde0;border-top:1px solid #dcdde0"></div>
<div class="a" style="left:1439px;top:540px;width:1px;height:19px;background:#dcdde0"></div>
<div class="a" style="left:1348px;top:543px;color:#c2c2c2">VAT 0%</div>
<div class="a" style="left:1440px;top:543px;width:136px;text-align:right;color:#cbcbcb">$0.00</div>
<div class="a" style="left:1314px;top:559px;width:265px;height:19px;background:#edeef0;border-left:1px solid #dcdde0;border-top:1px solid #dcdde0"></div>
<div class="a" style="left:1439px;top:559px;width:1px;height:19px;background:#dcdde0"></div>
<div class="a" style="left:1332px;top:562px;color:#c2c2c2">Calculated time</div>
<div class="a" style="left:1440px;top:562px;width:136px;text-align:right;color:#cbcbcb">0 min</div>
<div class="a" style="left:1314px;top:578px;width:265px;height:19px;background:#edeef0;border-left:1px solid #dcdde0;border-top:1px solid #dcdde0"></div>
<div class="a" style="left:1439px;top:578px;width:1px;height:19px;background:#dcdde0"></div>
<div class="a" style="left:1332px;top:581px;color:#c2c2c2">Commission</div>
<div class="a" style="left:1440px;top:581px;width:136px;text-align:right;color:#cbcbcb">$0.00</div>
<div class="a" style="left:1314px;top:597px;width:265px;height:19px;background:#edeef0;border-left:1px solid #dcdde0;border-top:1px solid #dcdde0"></div>
<div class="a" style="left:1439px;top:597px;width:1px;height:19px;background:#dcdde0"></div>
<div class="a" style="left:1332px;top:600px;color:#9d9d9d">Use SP2</div>
<div class="a" style="left:1503px;top:601px;width:13px;height:13px;border:1px solid #d0d0d0;background:#eeeff1"></div>
<div class="a" style="left:1314px;top:616px;width:265px;height:19px;background:#edeef0;border-left:1px solid #dcdde0;border-top:1px solid #dcdde0"></div>
<div class="a" style="left:1439px;top:616px;width:1px;height:19px;background:#dcdde0"></div>
<div class="a" style="left:1332px;top:619px;color:#9d9d9d">Use customer disco...</div>
<div class="a" style="left:1503px;top:620px;width:13px;height:13px;border:1px solid #d0d0d0;background:#eeeff1"></div>
<svg style="left:1503px;top:615px" width="14" height="18"><path d="M3.5 11L6 15L12.5 1.5" fill="none" stroke="#bdbdbd" stroke-width="1.3"/></svg>
<div class="a" style="left:1314px;top:635px;width:265px;height:19px;background:#edeef0;border-left:1px solid #dcdde0;border-top:1px solid #dcdde0"></div>
<div class="a" style="left:1439px;top:635px;width:1px;height:19px;background:#dcdde0"></div>
<div class="a" style="left:1332px;top:638px;color:#9d9d9d">Cash discount</div>
<div class="a" style="left:1503px;top:639px;width:13px;height:13px;border:1px solid #d0d0d0;background:#eeeff1"></div>
<svg style="left:1503px;top:634px" width="14" height="18"><path d="M3.5 11L6 15L12.5 1.5" fill="none" stroke="#bdbdbd" stroke-width="1.3"/></svg>
<div class="a" style="left:1314px;top:654px;width:265px;height:19px;background:#edeef0;border-left:1px solid #dcdde0;border-top:1px solid #dcdde0"></div>
<div class="a" style="left:1439px;top:654px;width:1px;height:19px;background:#dcdde0"></div>
<div class="a" style="left:1332px;top:657px;color:#c2c2c2">Contribution margin</div>
<div class="a" style="left:1440px;top:657px;width:136px;text-align:right;color:#cbcbcb">$10,491.16</div>
<div class="a" style="left:1314px;top:673px;width:265px;height:19px;background:#edeef0;border-left:1px solid #dcdde0;border-top:1px solid #dcdde0"></div>
<div class="a" style="left:1439px;top:673px;width:1px;height:19px;background:#dcdde0"></div>
<div class="a" style="left:1332px;top:676px;color:#c2c2c2">Rel. Contribution m...</div>
<div class="a" style="left:1440px;top:676px;width:136px;text-align:right;color:#cbcbcb">$0.00 / Hour</div>
<div class="a" style="left:1314px;top:692px;width:265px;height:19px;background:#edeef0;border-left:1px solid #dcdde0;border-top:1px solid #dcdde0"></div>
<div class="a" style="left:1439px;top:692px;width:1px;height:19px;background:#dcdde0"></div>
<div class="a" style="left:1332px;top:695px;color:#c2c2c2">Contibution margin ...</div>
<div class="a" style="left:1440px;top:695px;width:136px;text-align:right;color:#cbcbcb">100 %</div>
<div class="a" style="left:1314px;top:711px;width:265px;height:19px;background:#edeef0;border-left:1px solid #dcdde0;border-top:1px solid #dcdde0"></div>
<div class="a" style="left:1439px;top:711px;width:1px;height:19px;background:#dcdde0"></div>
<div class="a" style="left:1332px;top:714px;color:#c2c2c2">Contibution margin ...</div>
<div class="a" style="left:1440px;top:714px;width:136px;text-align:right;color:#cbcbcb">0 %</div>
<div class="a" style="left:1314px;top:730px;width:265px;height:19px;background:#edeef0;border-left:1px solid #dcdde0;border-top:1px solid #dcdde0"></div>
<div class="a" style="left:1439px;top:730px;width:1px;height:19px;background:#dcdde0"></div>
<div class="a" style="left:1332px;top:733px;color:#9d9d9d">Show finalcost.</div>
<div class="a" style="left:1503px;top:734px;width:13px;height:13px;border:1px solid #d0d0d0;background:#eeeff1"></div>
<div class="a" style="left:1314px;top:749px;width:265px;height:19px;background:#edeef0;border-left:1px solid #dcdde0;border-top:1px solid #dcdde0"></div>
<div class="a" style="left:1439px;top:749px;width:1px;height:19px;background:#dcdde0"></div>
<div class="a" style="left:1332px;top:752px;color:#c2c2c2">Finalcost. PP</div>
<div class="a" style="left:1440px;top:752px;width:136px;text-align:right;color:#cbcbcb">$0.00</div>
<div class="a" style="left:1314px;top:768px;width:265px;height:19px;background:#edeef0;border-left:1px solid #dcdde0;border-top:1px solid #dcdde0"></div>
<div class="a" style="left:1439px;top:768px;width:1px;height:19px;background:#dcdde0"></div>
<div class="a" style="left:1332px;top:771px;color:#c2c2c2">Finalcost. Time</div>
<div class="a" style="left:1440px;top:771px;width:136px;text-align:right;color:#cbcbcb">0 min</div>
<div class="a" style="left:1298px;top:787px;width:281px;height:21px;background:#e7e8ea;border-top:1px solid #dcdde0"></div>
<div class="a" style="left:1318px;top:791px;font-weight:bold;font-size:12px;color:#b5b5b5">History</div>
<svg style="left:1565px;top:794px" width="11" height="7"><path d="M1 5.5L5 1.5L9 5.5" fill="none" stroke="#cfcfcf" stroke-width="1.2"/></svg>
<div class="a" style="left:1314px;top:808px;width:265px;height:19px;background:#edeef0;border-left:1px solid #dcdde0;border-top:1px solid #dcdde0"></div>
<div class="a" style="left:1439px;top:808px;width:1px;height:19px;background:#dcdde0"></div>
<div class="a" style="left:1332px;top:811px;color:#c2c2c2">Quotation</div>
<div class="a" style="left:1444px;top:811px;color:#cbcbcb">Q201906/0031</div>
<svg style="left:1564px;top:816px" width="12" height="4"><rect x="0.5" y="0.5" width="2" height="2" fill="#888"/><rect x="4.5" y="0.5" width="2" height="2" fill="#888"/><rect x="8.5" y="0.5" width="2" height="2" fill="#888"/></svg>
<div class="a" style="left:1314px;top:827px;width:265px;height:19px;background:#edeef0;border-left:1px solid #dcdde0;border-top:1px solid #dcdde0"></div>
<div class="a" style="left:1439px;top:827px;width:1px;height:19px;background:#dcdde0"></div>
<div class="a" style="left:1332px;top:830px;color:#c2c2c2">*Orderconfirmation...</div>
<div class="a" style="left:1444px;top:830px;color:#cbcbcb">O201906/0056</div>
</div>
</div>
<div class="a" style="left:1579px;top:153px;width:19px;height:683px;background:#f3f3f5;border-right:1px solid #cfcfcf;border-top:1px solid #d8d8d8"></div>
<svg style="left:1584px;top:159px" width="10" height="7"><path d="M0.5 5.5H8.5L4.5 1Z" fill="#c6c6c6"/></svg>
<svg style="left:1584px;top:825px" width="10" height="7"><path d="M0.5 0.5H8.5L4.5 5Z" fill="#c6c6c6"/></svg>

<!-- BOTTOM -->
<div class="a" style="left:204px;top:835px;width:1394px;height:1px;background:#e1e1e1"></div>
<div class="a" style="left:1597px;top:835px;width:1px;height:37px;background:#cfcfcf"></div>
<div class="a" style="left:0;top:871px;width:1600px;height:1px;background:#d2d2d2"></div>
<div class="a" style="left:226px;top:848px;color:#a8a8a8">created</div>
<div class="a" style="left:337px;top:845px;width:175px;height:21px;border:1px solid #d0d0d0;background:#f7f7f7"></div>
<div class="a" style="left:340px;top:848px;color:#333">12/20/2019 9:46:14 AM - admin</div>
<div class="a" style="left:614px;top:848px;color:#a8a8a8">Modified</div>
<div class="a" style="left:684px;top:845px;width:175px;height:21px;border:1px solid #d0d0d0;background:#f7f7f7"></div>
<div class="a" style="left:687px;top:848px;color:#333">12/20/2019 9:50:23 AM - admin</div>
<div class="a" style="left:13px;top:877px;color:#333">Projects [23 / 313]</div>
<div class="a" style="left:114px;top:871px;width:171px;height:27px;background:#f7f7f7;border:1px solid #d2d2d2;border-top:none;border-bottom:2px solid #bdbdbd"></div>
<div class="a" style="left:125px;top:877px;color:#333">Closing invoice IV201912/0017</div>
<svg style="left:1582px;top:882px" width="10" height="6"><path d="M0.5 0.5H8.5L4.5 4.5Z" fill="#555"/></svg>

</body></html>
